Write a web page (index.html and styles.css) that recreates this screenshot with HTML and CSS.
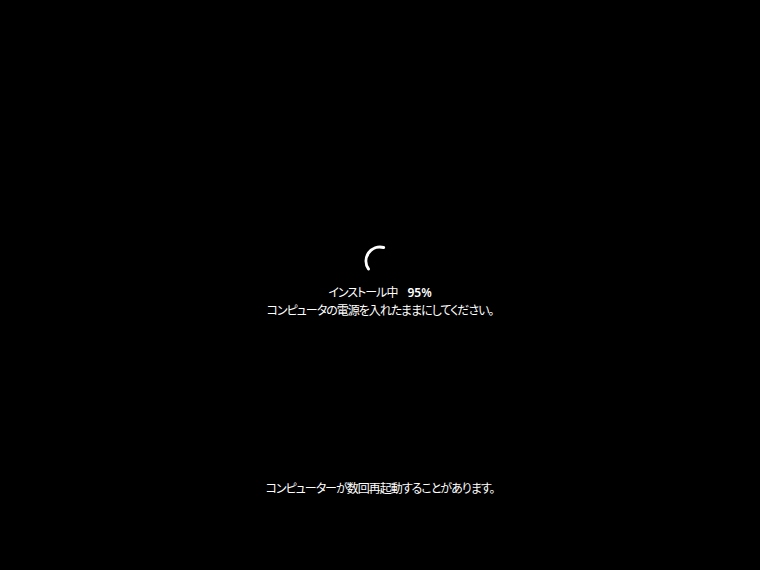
FILE: index.html
```html
<!DOCTYPE html>
<html lang="ja">
<head>
<meta charset="utf-8">
<link rel="stylesheet" href="styles.css">
</head>
<body>
<div class="screen">
  <div class="spinner">
    <svg width="32" height="32" viewBox="364 245 32 32">
      <path d="M 368.5 269 A 14 14 0 0 1 383.6 247.5" fill="none" stroke="#fff" stroke-width="3" stroke-linecap="round"/>
    </svg>
  </div>
  <div class="status">
    <div class="line">インストール中<span class="pct">95%</span></div>
    <div class="line">コンピュータの電源を入れたままにしてください。</div>
  </div>
  <div class="footer line">コンピューターが数回再起動することがあります。</div>
</div>
</body>
</html>
```

FILE: styles.css
```css
html, body {
  margin: 0;
  padding: 0;
  background: #000;
}
.screen {
  width: 760px;
  height: 570px;
  display: flex;
  flex-direction: column;
  align-items: center;
  padding-top: 245px;
  box-sizing: border-box;
  color: #fff;
  font-family: "Noto Sans CJK JP", "Noto Sans", sans-serif;
  font-size: 12px;
  font-feature-settings: "palt";
  letter-spacing: -1px;
}
.spinner {
  width: 32px;
  height: 32px;
}
.spinner svg {
  display: block;
}
.status {
  margin-top: 6px;
  display: flex;
  flex-direction: column;
  align-items: center;
}
.line {
  line-height: 17px;
  white-space: nowrap;
}
.pct {
  margin-left: 10px;
  letter-spacing: 0;
  font-family: "Noto Sans", "Noto Sans CJK JP", sans-serif;
  font-weight: 600;
}
.footer {
  margin-top: 161px;
}
```
